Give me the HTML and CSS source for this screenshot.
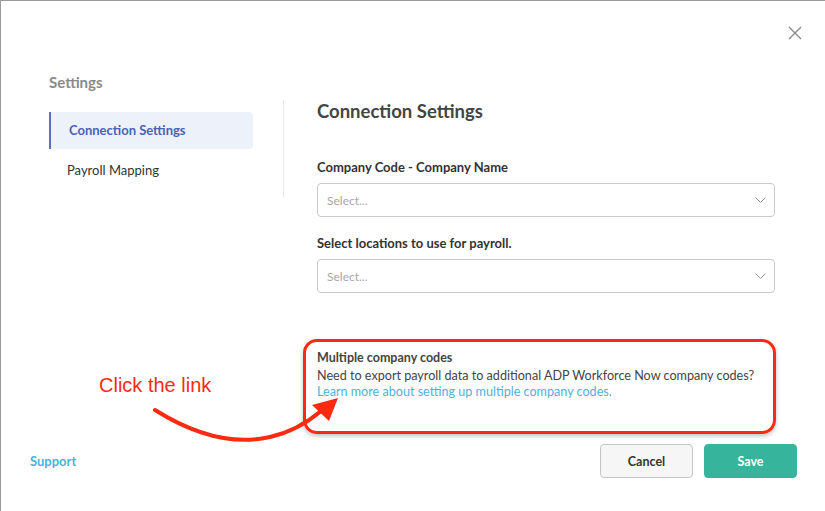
FILE: index.html
```html
<!DOCTYPE html>
<html lang="en">
<head>
    <meta charset="UTF-8">
    <meta name="viewport" content="width=device-width, initial-scale=1.0">
    <title>Connection Settings</title>
    <link rel="stylesheet" href="styles.css">
</head>
<body>
    <div class="modal">
        <button class="close-btn" aria-label="Close">
            <svg width="14" height="14" viewBox="0 0 14 14"><path d="M1 1 L13 13 M13 1 L1 13" stroke="#8a8a8a" stroke-width="1.4" fill="none"/></svg>
        </button>

        <div class="modal-body">
            <div class="sidebar">
                <div class="sidebar-title">Settings</div>
                <ul class="nav">
                    <li class="nav-item active">Connection Settings</li>
                    <li class="nav-item">Payroll Mapping</li>
                </ul>
            </div>
            <div class="divider"></div>
            <div class="content">
                <h2>Connection Settings</h2>
                <div class="form-group">
                    <label>Company Code - Company Name</label>
                    <div class="select">
                        <span class="placeholder">Select...</span>
                        <svg class="chevron" width="11" height="6" viewBox="0 0 11 6"><path d="M0.5 0.5 L5.5 5.5 L10.5 0.5" stroke="#999" stroke-width="1" fill="none"/></svg>
                    </div>
                </div>
                <div class="form-group">
                    <label>Select locations to use for payroll.</label>
                    <div class="select">
                        <span class="placeholder">Select...</span>
                        <svg class="chevron" width="11" height="6" viewBox="0 0 11 6"><path d="M0.5 0.5 L5.5 5.5 L10.5 0.5" stroke="#999" stroke-width="1" fill="none"/></svg>
                    </div>
                </div>
                <div class="info-box">
                    <div class="info-title">Multiple company codes</div>
                    <div class="info-text">Need to export payroll data to additional ADP Workforce Now company codes?</div>
                    <a class="info-link" href="#">Learn more about setting up multiple company codes.</a>
                </div>
            </div>
        </div>

        <div class="modal-footer">
            <a class="support-link" href="#">Support</a>
            <div class="actions">
                <button class="btn btn-cancel">Cancel</button>
                <button class="btn btn-save">Save</button>
            </div>
        </div>

        <!-- annotation drawn over the page -->
        <div class="note-text">Click the link</div>
        <svg class="note-arrow" width="825" height="511" viewBox="0 0 825 511">
            <path d="M155 410 C190 432 230 446 270 437 C292 432 308 422 321 411" stroke="#fb2a10" stroke-width="4" stroke-linecap="round" fill="none"/>
            <polygon points="338,398 312,405 329,421" fill="#fb2a10"/>
        </svg>
    </div>
</body>
</html>
```

FILE: styles.css
```css
* {
    box-sizing: border-box;
}
body {
    margin: 0;
    font-family: 'Lato', 'Liberation Sans', sans-serif;
    background: #fff;
    color: #444;
}
.modal {
    position: relative;
    height: 511px;
    border-top: 1px solid #9a9a9a;
    border-left: 1px solid #9a9a9a;
    display: flex;
    flex-direction: column;
}
.close-btn {
    position: absolute;
    top: 25px;
    right: 23px;
    background: none;
    border: none;
    padding: 0;
    cursor: pointer;
}
.modal-body {
    display: flex;
    align-items: flex-start;
}
.sidebar {
    width: 252px;
    padding-left: 48px;
    padding-top: 72px;
}
.sidebar-title {
    font-size: 15px;
    font-weight: bold;
    color: #8a8a8a;
    line-height: 18px;
    margin-bottom: 21px;
}
.nav {
    list-style: none;
    margin: 0;
    padding: 0;
}
.nav-item {
    height: 37px;
    line-height: 37px;
    padding-left: 18px;
    font-size: 13px;
    color: #333;
    margin-bottom: 3px;
}
.nav-item.active {
    background: #edf1f9;
    border-left: 2px solid #5a6fc0;
    border-radius: 0 4px 4px 0;
    color: #4a62b8;
    font-weight: bold;
}
.divider {
    width: 1px;
    height: 97px;
    background: #e8e8e8;
    margin: 99px 33px 0 30px;
}
.content {
    width: 458px;
    padding-top: 99px;
}
.content h2 {
    margin: 0 0 37px;
    font-size: 18.5px;
    line-height: 22px;
    color: #444;
}
.form-group {
    margin-bottom: 18px;
}
.form-group label {
    display: block;
    font-size: 13px;
    line-height: 16px;
    font-weight: bold;
    color: #333;
    margin-bottom: 8px;
}
.select {
    height: 34px;
    border: 1px solid #cacaca;
    border-radius: 4px;
    display: flex;
    align-items: center;
    justify-content: space-between;
    padding: 0 8px 0 9px;
}
.placeholder {
    font-size: 12px;
    color: #a8a8a8;
}
.info-box {
    margin: 46px 0 0 -14px;
    width: 473px;
    height: 95px;
    border: 3px solid #fb2a10;
    border-radius: 14px;
    padding: 8px 0 0 11px;
    box-shadow: 0 2px 4px rgba(0, 0, 0, 0.25);
    font-size: 12.6px;
}
.info-title {
    font-weight: bold;
    font-size: 12.5px;
    color: #444;
    line-height: 15px;
    margin-bottom: 3px;
}
.info-text {
    line-height: 16px;
    color: #444;
}
.info-link {
    display: block;
    line-height: 16px;
    color: #4fb1d8;
    text-decoration: none;
}
.modal-footer {
    margin-top: auto;
    display: flex;
    align-items: center;
    justify-content: space-between;
    padding: 0 28px 33px 29px;
}
.support-link {
    font-size: 13px;
    font-weight: bold;
    color: #4fb1d8;
    text-decoration: none;
}
.actions {
    display: flex;
    gap: 11px;
}
.btn {
    width: 93px;
    height: 34px;
    border-radius: 4px;
    font-family: inherit;
    font-size: 12.5px;
    font-weight: bold;
    cursor: pointer;
}
.btn-cancel {
    background: #f6f6f6;
    border: 1px solid #c6c6c6;
    color: #333;
}
.btn-save {
    background: #37b49c;
    border: 1px solid #37b49c;
    color: #fff;
}
.note-text {
    position: absolute;
    left: 98px;
    top: 373px;
    font-family: 'Liberation Sans', Arial, sans-serif;
    font-size: 20px;
    color: #fb2a10;
}
.note-arrow {
    position: absolute;
    left: -1px;
    top: -1px;
    pointer-events: none;
}
```
